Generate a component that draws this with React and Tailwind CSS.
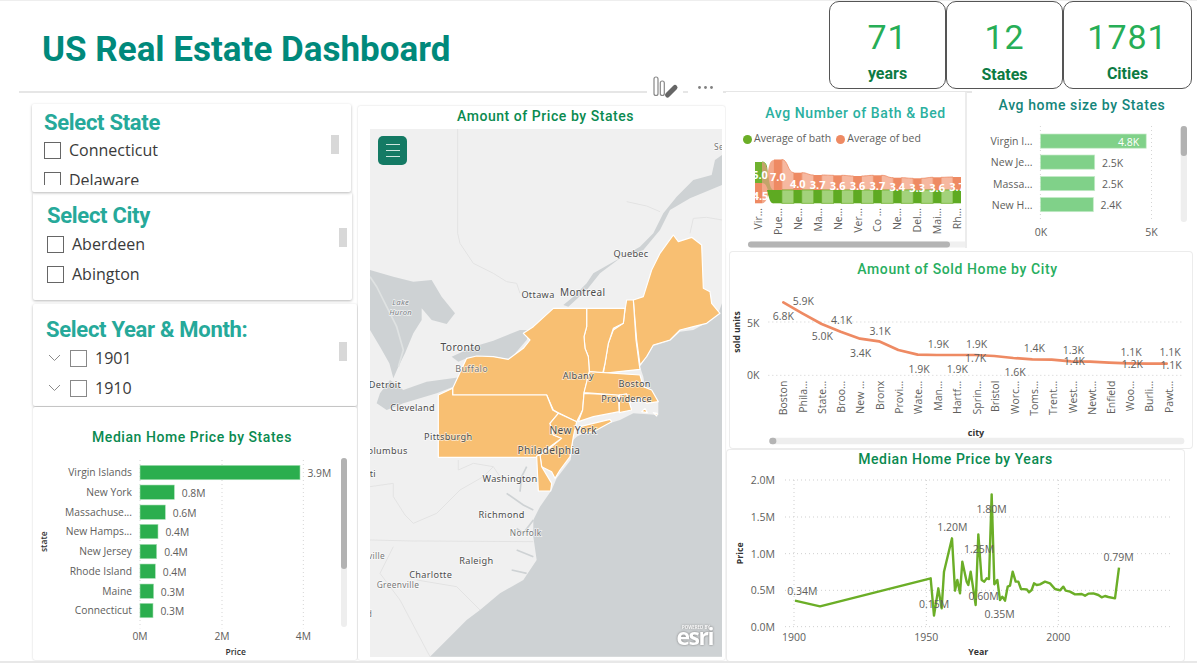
const sans = { fontFamily: "'Open Sans', sans-serif" };
const Chart = ({ x, y, w, h, children }) => (
  <svg width={w} height={h} viewBox={`${x} ${y} ${w} ${h}`} className="block shrink-0" style={sans}>{children}</svg>
);
const Txt = ({ x, y, s = 10, fill = "#605e5c", a = "middle", w, rot, children }) => (
  <text x={x} y={y} fontSize={s} fill={fill} textAnchor={a} dominantBaseline="central" fontWeight={w}
    transform={rot ? `rotate(${rot} ${x} ${y})` : undefined}>{children}</text>
);
const Check = ({ c = "border-[#666]" }) => <span className={`block w-[17px] h-[17px] border bg-white shrink-0 ${c}`} />;

function Slicer({ title, items, tree, outer, head, list, thumb }) {
  return (
    <div className={`bg-white rounded-[2px] shadow-[0_1px_3px_rgba(0,0,0,0.28)] overflow-hidden shrink-0 ${outer}`}>
      <div className={`font-['Roboto'] font-bold text-[22px] leading-[26px] tracking-[-0.3px] -mb-[1px] text-[#26a99a] ${head}`}>{title}</div>
      <div className={`flex ${list}`}>
        <div className="flex-1 overflow-hidden">
          {items.map((t) => (
            <div key={t} className="flex items-center h-[30px]">
              {tree && (
                <svg width="13" height="8" viewBox="0 0 13 8" className="mr-[9px] shrink-0"><path d="M1 1l5.5 5.5L12 1" fill="none" stroke="#8a8a8a" strokeWidth="1" /></svg>
              )}
              <Check c={tree ? "border-[#888]" : "border-[#666]"} />
              <span className="ml-[8px] text-[16px] text-[#3a3a3a] [font-family:'Open_Sans',sans-serif]">{t}</span>
            </div>
          ))}
        </div>
        <div className={`w-[8px] h-[19px] bg-[#d8d8d8] shrink-0 ${thumb}`} />
      </div>
    </div>
  );
}

function Kpi({ value, label, w, lab }) {
  return (
    <div className={`h-[88px] border border-[#555] rounded-[10px] bg-white flex flex-col items-center shrink-0 font-['Roboto'] ${w}`}>
      <div className="text-[34px] leading-[40px] mt-[15px] text-[#27ae57] tracking-[1px]">{value}</div>
      <div className={`text-[16px] leading-[20px] font-bold text-[#0c7b43] ${lab}`}>{label}</div>
    </div>
  );
}

function StatesBar() {
  const zx = (v) => v / 3, zy = (v) => 300 + v / 3;
  const rows = [
    ["Virgin Islands", 517, 900, "3.9M", 958],
    ["New York", 576, 523, "0.8M", 581],
    ["Massachuse...", 636, 496, "0.6M", 554],
    ["New Hamps...", 694, 474, "0.4M", 532],
    ["New Jersey", 754, 470, "0.4M", 528],
    ["Rhode Island", 813, 466, "0.4M", 524],
    ["Maine", 873, 461, "0.3M", 518],
    ["Connecticut", 931, 459, "0.3M", 517],
  ];
  return (
    <Chart x={33} y={447} w={324} h={213}>
      {[420, 666, 910].map((g) => (
        <line key={g} x1={zx(g)} x2={zx(g)} y1={zy(480)} y2={zy(985)} stroke="#d5d5d5" strokeDasharray="1 3" />
      ))}
      {rows.map(([n, y, e, v, vx]) => (
        <g key={n + y}>
          <Txt x={zx(396)} y={zy(y)} a="end" s={10.3}>{n}</Txt>
          <rect x={140} y={zy(y) - 7} width={zx(e) - 140} height={14.4} fill="#2bae4e" stroke="#a9e0b6" strokeWidth=".6" />
          <Txt x={zx(vx)} y={zy(y + 3)} s={10.3}>{v}</Txt>
        </g>
      ))}
      <Txt x={zx(420)} y={zy(1008)} s={10.3}>0M</Txt>
      <Txt x={zx(666)} y={zy(1008)} s={10.3}>2M</Txt>
      <Txt x={zx(910)} y={zy(1008)} s={10.3}>4M</Txt>
      <Txt x={zx(707)} y={zy(1055)} s={8.5} w={600} fill="#333">Price</Txt>
      <Txt x={zx(130)} y={zy(725)} s={8.5} w={600} fill="#333" rot={-90}>state</Txt>
      <rect x={341} y={458} width={6} height={169} rx={3} fill="#eeeeee" />
      <rect x={341} y={458} width={6} height={111} rx={3} fill="#b2b2b2" />
    </Chart>
  );
}

function MapPanel() {
  const L = ({ x, y, s = 27.5, c = "#4c4c4c", a = "middle", i, children }) => (
    <text x={x} y={y} fontSize={s} textAnchor={a} dominantBaseline="central" fontStyle={i ? "italic" : undefined}
      stroke="#ffffff" strokeWidth="4" strokeOpacity="0.7" paintOrder="stroke" fill={c} letterSpacing="1">{children}</text>
  );
  return (
    <div className="relative w-[352px] h-[528px] ml-[12px] mt-[5px] bg-[#f0f0f0] overflow-hidden">
      <svg width="352" height="528" viewBox="370 129 352 528" className="block" style={{ fontFamily: "'Noto Sans', sans-serif" }}>
        <g transform="translate(360 100) scale(0.33333)">
          <g fill="none" stroke="#e3e3e3" strokeWidth="3">
            <path d="M293 87V400L300 430 340 490 400 520 440 545 470 550 480 580" />
            <path d="M990 400L1000 355 1040 352 1086 360" />
            <path d="M800 305L860 318 900 335" />
            <path d="M30 1320L160 1323 520 1325" />
            <path d="M30 1160L100 1150 100 1190 135 1245 160 1270 230 1240 300 1170 370 1130 400 1100" />
            <path d="M295 1080V1110L340 1090 400 1100 420 1130" />
            <path d="M100 1340L60 1420 120 1500 210 1670" />
            <path d="M170 1440L290 1460 360 1530" />
          </g>
          <path fill="#ced2d4" d="M1086 610L1075 640 1040 668 1000 690 960 695 930 722 880 738 860 770 840 800 850 830 855 860 895 905 895 945 820 940 780 960 700 985 650 1010 640 1020 632 1080 590 1135 575 1170 540 1220 520 1260 520 1310 530 1380 490 1440 420 1480 360 1530 320 1560 270 1610 210 1670H1086Z" />
          <path fill="#ced2d4" d="M1086 165L1065 180 1055 225 1000 240 950 290 910 340 880 400 840 440 770 480 700 520 680 550 640 590 610 615 625 620 680 570 720 520 780 475 850 450 900 390 930 330 990 295 1086 255Z" />
          <path fill="#ced2d4" d="M30 510L100 530 160 545 215 540 245 590 285 640 260 672 215 660 185 625 185 660 160 700 135 760 115 800 100 835 88 790 60 740 30 690Z" />
          <path fill="none" stroke="#dfe2e2" strokeWidth="5" d="M30 530L50 560 80 620 110 680 130 750 115 800" />
          <path fill="#ced2d4" d="M275 770L340 740 400 722 480 690 510 690 500 720 450 778 400 770 320 775 295 785Z" />
          <path fill="#ced2d4" d="M310 830L280 860 230 880 130 910 80 930 50 910 60 880 90 840 130 870 200 845Z" />
          <path fill="none" stroke="#ced2d4" strokeWidth="5" d="M500 1100L485 1130 480 1175M440 1180L490 1215 520 1230M520 1260L490 1300 470 1285M470 1350L520 1370M455 1410L500 1420" />
          <g fill="#f8bf72" stroke="#ffffff" strokeWidth="3.5" strokeLinejoin="round">
            <path d="M820 600L850 590 875 510 900 460 940 405 955 425 995 412 1025 435 1030 565 1050 575 1055 610 1080 640 1040 670 1000 680 960 690 930 720 880 735 860 770 840 795 830 720Z" />
            <path d="M800 600L820 600 828 720 838 795 840 808 730 820 735 790 745 730 760 690 790 670 795 630Z" />
            <path d="M680 625L795 625 790 670 760 685 745 730 735 790 728 820 688 815 685 770 675 745 672 710 680 680Z" />
            <path d="M580 625L680 625 680 680 672 710 675 745 685 770 688 815 672 880 668 930 650 965 595 938 580 930 560 885 278 885 278 865 320 775 350 768 400 770 445 778 490 745 510 720 490 700 520 680Z" />
            <path d="M235 885L278 865 278 885 560 885 578 930 595 940 570 970 580 1005 605 1015 570 1040 528 1072H235Z" />
            <path d="M595 940L650 965 640 1010 630 1070 600 1110 585 1135 575 1115 545 1100 540 1065 575 1040 605 1015 580 1005 570 970Z" />
            <path d="M530 1068L540 1065 545 1100 575 1150 572 1173H535Z" />
            <path d="M672 880L775 885 778 935 700 950 655 965 668 930Z" />
            <path d="M688 815L840 825 850 860 875 870 895 905 860 910 845 895 800 910 800 882 775 885 672 878Z" />
            <path d="M778 885L800 882 815 930 778 938Z" />
            <path d="M660 980L750 958 755 965 700 995 665 1000Z" />
            <path d="M845 935L855 925 862 938ZM880 938L892 940 890 948Z" />
          </g>
          <L x={813} y={460}>Quebec</L>
          <L x={534} y={585}>Ottawa</L>
          <L x={668} y={577} s={30}>Montreal</L>
          <L x={302} y={741} s={31}>Toronto</L>
          <L x={335} y={807} s={27} c="#777">Buffalo</L>
          <L x={75} y={853}>Detroit</L>
          <L x={655} y={827}>Albany</L>
          <L x={824} y={851}>Boston</L>
          <L x={1062} y={140} a="start" s={25} c="#777">Sept</L>
          <L x={122} y={605} s={23} c="#7a8085" i>Lake</L>
          <L x={122} y={635} s={23} c="#7a8085" i>Huron</L>
          <L x={800} y={896}>Providence</L>
          <L x={158} y={922}>Cleveland</L>
          <L x={265} y={1011}>Pittsburgh</L>
          <L x={640} y={989} s={30.5}>New York</L>
          <L x={567} y={1051} s={30.5}>Philadelphia</L>
          <L x={143} y={1051} a="end">Columbus</L>
          <L x={48} y={1120} a="end">Cincinnati</L>
          <L x={450} y={1137}>Washington</L>
          <L x={425} y={1245}>Richmond</L>
          <L x={497} y={1299} s={25} c="#777">Norfolk</L>
          <L x={75} y={1368} a="end" s={25} c="#777">Knoxville</L>
          <L x={349} y={1382}>Raleigh</L>
          <L x={212} y={1425}>Charlotte</L>
          <L x={114} y={1454} s={25} c="#777">Greenville</L>
          <L x={37} y={1540} a="end" s={25} c="#777">Lead</L>
        </g>
        <text x="696" y="628.5" fontSize="4.4" fill="#fff" textAnchor="middle" fontWeight="600" style={{ filter: "drop-shadow(0 0 1px #888)" }}>POWERED BY</text>
        <text x="695.5" y="645" fontSize="23" fill="#fff" textAnchor="middle" fontWeight="700" textLength="38" style={{ fontFamily: "'Open Sans', sans-serif", filter: "drop-shadow(0 0 1px #777)" }}>esri</text>
      </svg>
      <div className="absolute left-[8px] top-[7px] w-[29px] h-[29px] rounded-[5px] bg-[#147a64] flex flex-col items-center justify-center gap-[4.5px]">
        <span className="block w-[14px] h-[1.5px] bg-[#cfe6df]" />
        <span className="block w-[14px] h-[1.5px] bg-[#cfe6df]" />
        <span className="block w-[14px] h-[1.5px] bg-[#cfe6df]" />
      </div>
    </div>
  );
}

function Ribbon() {
  const cx = (i) => 758 + 19.9 * i;
  const tops = [null, 159.5, 172.7, 175, 175.3, 176, 175.3, 177.7, 178.3, 177.3, 177];
  const bot = 190;
  const base = 203.3;
  const vals = ["", "7.0", "4.0", "3.7", "3.6", "3.6", "3.7", "3.4", "3.3", "3.6", "3.7"];
  const names = ["Vir...", "Pue...", "Ne...", "Ma...", "Ne...", "Ver...", "Co ...", "Ne...", "Del...", "Mai...", "Rh..."];
  const hw = 4;
  return (
    <Chart x={726} y={148} w={239} h={100}>
      <defs><clipPath id="rb"><rect x="755" y="150" width="206" height="60" /></clipPath></defs>
      <g clipPath="url(#rb)">
        <rect x="748" y="162" width="14" height="21" rx="0" fill="#6fb22f" />
        <path d="M762 162C767 162 767 168 767 175 767 180 765 183 762 183Z" fill="#a3d27b" stroke="#6fb22f" />
        <rect x="748" y="183" width="14" height="20.3" fill="#ee8a63" />
        <path d="M762 183C770 183 766 160 774 160V190C768 190 768 203.3 762 203.3Z" fill="#f3a98b" />
        <path d="M762 162C770 162 767 190 774 190V203.3C768 203.3 770 183 762 183Z" fill="#c4a46a" />
        {tops.slice(1).map((t, k) => {
          const i = k + 1;
          const x = cx(i);
          const nt = tops[i + 1];
          return (
            <g key={i}>
              {nt != null && (
                <>
                  <path d={`M${x + hw} ${t}C${x + 10} ${t} ${x + 10} ${nt} ${x + 19.9 - hw} ${nt}V${bot}H${x + hw}Z`} fill="#f6b8a0" stroke="#ee8a63" strokeWidth=".8" />
                  <rect x={x + hw} y={bot} width={19.9 - 2 * hw} height={base - bot} fill="#a3d27b" stroke="#6fb22f" strokeWidth=".8" />
                </>
              )}
              <rect x={x - hw} y={t} width={hw * 2} height={bot - t} fill="#ee8a63" />
              <rect x={x - hw} y={bot} width={hw * 2} height={base - bot} fill="#5eaa22" />
            </g>
          );
        })}
        <path d="M767 190C770 203 771 203.3 774 203.3H774V190Z" fill="#5eaa22" />
        <Txt x={760} y={174} s={11} fill="#fff" w={700}>5.0</Txt>
        <Txt x={760.5} y={195} s={11} fill="#fff" w={700}>4.5</Txt>
        {vals.slice(1).map((v, k) => (
          <Txt key={k} x={cx(k + 1)} y={[176, 183, 184.7, 185.3, 185, 185, 186.7, 187.3, 187, 186.7][k]} s={11} fill="#fff" w={700}>{v}</Txt>
        ))}
      </g>
      {names.map((n, i) => (
        <Txt key={i} x={cx(i)} y={208} s={10.5} a="end" rot={-90}>{n}</Txt>
      ))}
      <rect x="748" y="241.5" width="221" height="6" rx="3" fill="#f0f0f0" />
      <rect x="748" y="241.5" width="202" height="6" rx="3" fill="#b4b4b4" />
    </Chart>
  );
}

function HomeSize() {
  const rows = [
    ["Virgin I...", 141, 1146.2, "4.8K", 1128.5, "#fff"],
    ["New Je...", 162, 1094.7, "2.5K", 1112.5],
    ["Massa...", 183.5, 1094.7, "2.5K", 1112.5],
    ["New H...", 204.5, 1093.3, "2.4K", 1111],
  ];
  return (
    <Chart x={972} y={120} w={220} h={128}>
      <line x1="1040.4" x2="1040.4" y1="126" y2="222" stroke="#d5d5d5" strokeDasharray="1 3" />
      <line x1="1151.5" x2="1151.5" y1="126" y2="222" stroke="#d5d5d5" strokeDasharray="1 3" />
      {rows.map(([n, y, e, v, vx, f]) => (
        <g key={n}>
          <Txt x={1032.5} y={y} a="end" s={10.5}>{n}</Txt>
          <rect x={1040.4} y={y - 7} width={e - 1040.4} height={14.2} fill="#80d189" stroke="#c5ebc9" strokeWidth=".7" />
          <Txt x={vx} y={y + 0.5} s={10.5} fill={f || "#605e5c"}>{v}</Txt>
        </g>
      ))}
      <Txt x={1041} y={232} s={10.5}>0K</Txt>
      <Txt x={1151.5} y={232} s={10.5}>5K</Txt>
      <rect x="1180.7" y="126" width="6.3" height="96" rx="3" fill="#eeeeee" />
      <rect x="1180.7" y="126" width="6.3" height="30" rx="3" fill="#b2b2b2" />
    </Chart>
  );
}

function SoldLine() {
  const X = (v) => 725 + v / 3, Y = (v) => 250 + v / 3;
  const pts = [[175,157],[232,190],[290,222],[347,245],[405,266],[462,274],[520,300],[578,314],[635,315],[692,315],[750,315],[808,318],[865,324],[922,328],[980,329],[1038,334],[1095,335],[1152,338],[1210,340],[1268,341],[1325,341]];
  const labs = [["6.8K",175,198],["5.9K",235,153],["5.0K",292,258],["4.1K",350,210],["3.4K",407,310],["3.1K",465,243],["1.9K",582,358],["1.9K",640,282],["1.9K",697,358],["1.9K",755,282],["1.7K",752,325],["1.6K",870,367],["1.4K",928,295],["1.3K",1045,300],["1.4K",1048,333],["1.1K",1218,306],["1.2K",1222,342],["1.1K",1335,306],["1.1K",1338,345]];
  const cats = ["Boston","Phila...","State...","Broo...","New ...","Bronx","Provi...","Wate...","Man...","Hartf...","Sprin...","Bristol","Worc...","Toms...","Trent...","West...","Newt...","Enfield","Woo...","Burli...","Pawt..."];
  const cxs = [175,233,291,348,406,465,523,580,640,697,755,810,870,927,985,1045,1100,1158,1215,1273,1332];
  return (
    <Chart x={730} y={286} w={462} h={162}>
      {[216, 376].map((g) => (
        <line key={g} x1={X(130)} x2={X(1370)} y1={Y(g)} y2={Y(g)} stroke="#cfcfcf" strokeDasharray="1 3" />
      ))}
      <Txt x={X(85)} y={Y(218)} s={10.5}>5K</Txt>
      <Txt x={X(85)} y={Y(376)} s={10.5}>0K</Txt>
      <polyline points={pts.map(([a, b]) => `${X(a)},${Y(b)}`).join(" ")} fill="none" stroke="#ee8a63" strokeWidth="2.7" strokeLinejoin="round" strokeLinecap="round" />
      {labs.map(([t, a, b], i) => (
        <Txt key={i} x={X(a)} y={Y(b)} s={10.5}>{t}</Txt>
      ))}
      {cats.map((c, i) => (
        <Txt key={i} x={X(cxs[i])} y={Y(392)} s={10.5} a="end" rot={-90}>{c}</Txt>
      ))}
      <Txt x={X(35)} y={Y(246)} s={8.5} w={700} fill="#333" rot={-90}>sold units</Txt>
      <Txt x={X(753)} y={Y(548)} s={9} w={700} fill="#333">city</Txt>
      <rect x={X(133)} y={Y(563)} width={415} height={6.5} rx={3} fill="#eeeeee" />
      <rect x={X(133)} y={Y(563)} width={7} height={6.5} rx={3} fill="#b4b4b4" />
    </Chart>
  );
}

function YearLine() {
  const X = (v) => 725 + v / 3, Y = (v) => 445 + v / 3;
  const pts = [[210,467],[285,484],[617,400],[627,512],[640,430],[650,490],[657,380],[681,280],[690,437],[697,405],[705,445],[712,350],[725,410],[730,420],[737,380],[752,480],[760,268],[770,405],[778,410],[785,400],[792,402],[800,148],[808,418],[817,405],[825,465],[832,455],[840,467],[848,425],[855,422],[863,380],[872,410],[880,410],[888,432],[905,433],[912,442],[920,435],[927,415],[935,420],[945,418],[960,410],[975,415],[990,432],[1005,436],[1015,425],[1022,437],[1035,440],[1050,448],[1070,447],[1080,452],[1090,446],[1105,445],[1120,450],[1130,457],[1140,453],[1150,456],[1170,460],[1182,368]];
  const labs = [["0.34M",232,437],["0.15M",627,478],["1.20M",682,247],["1.25M",762,313],["1.80M",800,193],["0.60M",776,453],["0.35M",824,507],["0.79M",1181,337]];
  return (
    <Chart x={727} y={468} w={457} h={193}>
      {[105, 216, 326, 436, 545].map((g) => (
        <line key={g} x1={X(180)} x2={X(1340)} y1={Y(g)} y2={Y(g)} stroke="#cfcfcf" strokeDasharray="1 3" />
      ))}
      {[207, 604, 1000].map((g) => (
        <line key={g} x1={X(g)} x2={X(g)} y1={Y(105)} y2={Y(545)} stroke="#cfcfcf" strokeDasharray="1 3" />
      ))}
      {[["2.0M",105],["1.5M",216],["1.0M",326],["0.5M",436],["0.0M",545]].map(([t, y]) => (
        <Txt key={t} x={X(150)} y={Y(y)} a="end" s={10.5}>{t}</Txt>
      ))}
      {[["1900",207],["1950",604],["2000",1000]].map(([t, x]) => (
        <Txt key={t} x={X(x)} y={Y(577)} s={10.5}>{t}</Txt>
      ))}
      <Txt x={X(760)} y={Y(622)} s={8.8} w={700} fill="#333">Year</Txt>
      <Txt x={X(45)} y={Y(325)} s={8.8} w={700} fill="#333" rot={-90}>Price</Txt>
      <polyline points={pts.map(([a, b]) => `${X(a)},${Y(b)}`).join(" ")} fill="none" stroke="#6bae27" strokeWidth="2.4" strokeLinejoin="round" />
      {labs.map(([t, a, b]) => (
        <Txt key={t} x={X(a)} y={Y(b)} s={10.5}>{t}</Txt>
      ))}
    </Chart>
  );
}

export default function App() {
  return (
    <div className="relative w-[1197px] h-[664px] bg-white overflow-hidden flex flex-col">
      <div className="h-px bg-[#eeeeee] shrink-0" />
      <header className="h-[90px] shrink-0 flex justify-between">
        <h1 className="ml-[42px] mt-[28px] font-['Roboto'] font-bold text-[35px] leading-[42px] text-[#00897b] whitespace-nowrap">US Real Estate Dashboard</h1>
        <div className="flex mr-[5px]">
          <Kpi value="71" label="years" w="w-[117px]" lab="mt-[7px]" />
          <Kpi value="12" label="States" w="w-[117px]" lab="mt-[8px]" />
          <Kpi value="1781" label="Cities" w="w-[129px]" lab="mt-[7px]" />
        </div>
      </header>
      <div className="h-[2px] w-[1118px] ml-[19px] bg-[#e6e6e6] shrink-0" />
      <main className="flex h-[569px] shrink-0 -mt-[1px]">
        <div className="w-[358px] shrink-0 pl-[32px] pt-[12px] flex flex-col">
          <Slicer title="Select State" items={["Connecticut", "Delaware"]}
            outer="relative z-10 w-[319px] h-[88px]" head="pl-[12px] pt-[6px]" list="h-[50px] pl-[12px] pr-[12px] pt-[0px]" thumb="mt-[0px]" />
          <Slicer title="Select City" items={["Aberdeen", "Abington"]}
            outer="w-[319px] h-[108px] ml-[1px]" head="pl-[14px] pt-[11px]" list="pl-[14px] pr-[5px] pt-[1px]" thumb="-mt-[1px]" />
          <Slicer title="Select Year & Month:" items={["1901", "1910"]} tree
            outer="w-[324px] h-[102px] ml-[1px] mt-[4px]" head="pl-[13px] pt-[13px]" list="pl-[15px] pr-[10px] pt-[1px]" thumb="-mt-[1px]" />
          <div className="w-[324px] h-[253px] ml-[1px] mt-[1px] bg-white rounded-[2px] shadow-[0_0_2px_rgba(0,0,0,0.22)] overflow-hidden shrink-0">
            <div className="h-[40px] pt-[21px] pr-[6px] text-center font-['Roboto'] font-medium text-[14px] leading-[18px] tracking-[0.55px] text-[#0a8a50]">Median Home Price by States</div>
            <StatesBar />
          </div>
        </div>
        <div className="w-[367px] h-[554px] mt-[14px] shrink-0 bg-white rounded-[2px] shadow-[0_0_2px_rgba(0,0,0,0.18)]">
          <div className="h-[18px] pt-[1px] pl-[8px] text-center font-['Roboto'] font-medium text-[14px] leading-[18px] tracking-[0.55px] text-[#0a8a50]">Amount of Price by States</div>
          <MapPanel />
        </div>
        <div className="w-[466px] shrink-0 ml-[1px] flex flex-col">
          <div className="flex h-[156px] shrink-0">
            <div className="w-[239px] h-[156px] bg-white border-r-2 border-[#ececec] box-content shrink-0 -mr-[2px]">
              <div className="h-[20px] mt-[11px] text-center font-['Roboto'] text-[14px] font-medium leading-[20px] tracking-[0.6px] text-[#2bb0a0] pl-[20px]">Avg Number of Bath &amp; Bed</div>
              <div className="h-[14px] mt-[9px] mb-[2px] pl-[17px] flex items-center text-[10.5px] text-[#605e5c] [font-family:'Open_Sans',sans-serif]">
                <span className="block w-[9px] h-[9px] rounded-full bg-[#6bae27] mr-[2px]" />
                <span>Average of bath</span>
                <span className="block w-[9px] h-[9px] rounded-full bg-[#ee8a63] ml-[5px] mr-[2px]" />
                <span>Average of bed</span>
              </div>
              <Ribbon />
            </div>
            <div className="w-[220px] h-[158px] -mt-[2px] ml-[7px] bg-white shrink-0">
              <div className="h-[30px] pt-[6px] text-center font-['Roboto'] text-[14px] font-medium leading-[18px] tracking-[0.6px] text-[#14857a]">Avg home size by States</div>
              <HomeSize />
            </div>
          </div>
          <div className="w-[462px] h-[196px] ml-[4px] mt-[4px] bg-white rounded-[3px] shadow-[0_0_0_1px_#ececec] shrink-0">
            <div className="h-[34px] pt-[8px] pr-[7px] text-center font-['Roboto'] text-[14px] font-medium leading-[18px] tracking-[0.6px] text-[#27ae60]">Amount of Sold Home by City</div>
            <SoldLine />
          </div>
          <div className="w-[457px] h-[211px] ml-[1px] mt-[2px] bg-white rounded-[3px] shadow-[0_0_0_1px_#ececec] shrink-0">
            <div className="h-[18px] text-center font-['Roboto'] text-[14px] font-medium leading-[18px] tracking-[0.55px] text-[#0a8a50]">Median Home Price by Years</div>
            <YearLine />
          </div>
        </div>
      </main>
      <div className="h-[2px] bg-[#e8e8e8] shrink-0" />
      <svg className="absolute left-[645px] top-[74px]" width="80" height="26" viewBox="645 74 80 26">
        <rect x="647" y="74" width="36" height="26" fill="#fff" />
        <rect x="688" y="74" width="35" height="26" fill="#fff" />
        <rect x="654" y="77" width="4" height="18.5" rx="2" fill="#fff" stroke="#888" strokeWidth="1.2" />
        <rect x="660.3" y="81" width="4" height="14.5" rx="2" fill="#fff" stroke="#888" strokeWidth="1.2" />
        <path d="M667.5 95L675 87.5" stroke="#666" strokeWidth="5" strokeLinecap="round" />
        <circle cx="699.5" cy="87.5" r="1.4" fill="#808080" />
        <circle cx="705.5" cy="87.5" r="1.4" fill="#808080" />
        <circle cx="711.5" cy="87.5" r="1.4" fill="#808080" />
      </svg>
    </div>
  );
}
